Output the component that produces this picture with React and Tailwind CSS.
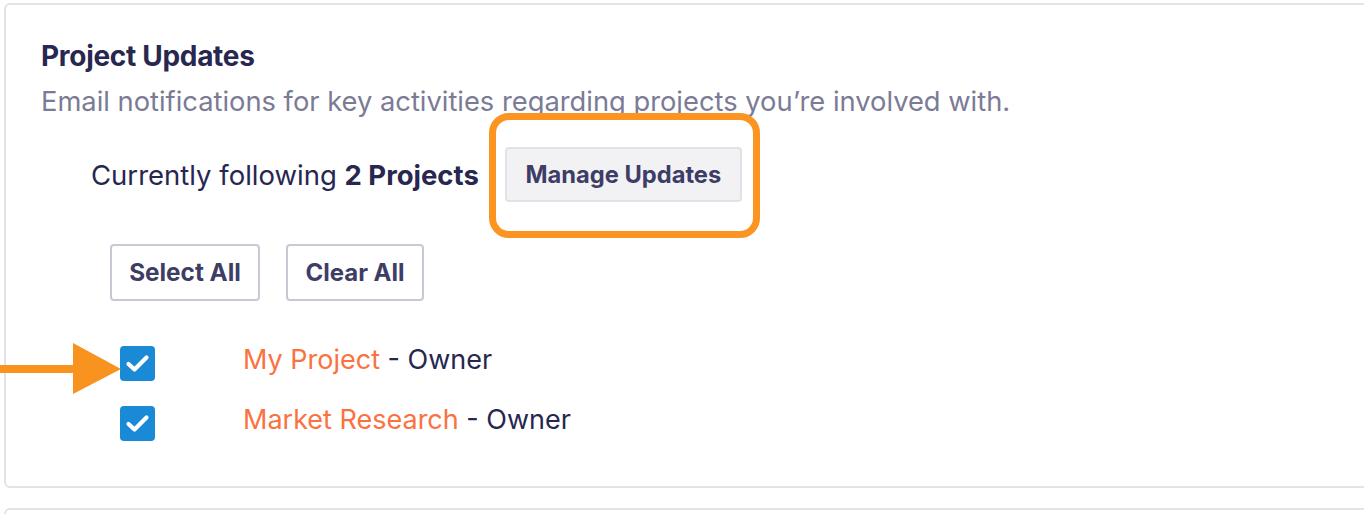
import React from "react";

function Check() {
  return (
    <div className="w-[35px] h-[35px] rounded-[4px] bg-[#1a8ad6] flex items-center justify-center">
      <svg width="35" height="35" viewBox="0 0 35 35" fill="none">
        <path d="M8.5 18 L14.5 23.5 L26.5 11.5" stroke="white" strokeWidth="4.2" strokeLinecap="round" strokeLinejoin="round" />
      </svg>
    </div>
  );
}

export default function App() {
  return (
    <div className="w-[1364px] h-[514px] bg-white overflow-hidden pt-[3px] pl-[4px] relative font-['Inter',sans-serif]">
      <div className="w-[1400px] h-[485px] border-2 border-[#e2e2e8] rounded-[6px] pl-[35px] pt-[34px] relative">
        <h2 className="text-[28px] leading-[34px] font-bold text-[#27274f] tracking-[-0.3px]">Project Updates</h2>
        <p className="text-[27.3px] leading-[34px] text-[#7b7b95] mt-[12px]">
          Email notifications for key activities regarding projects you’re involved with.
        </p>
        <div className="flex items-center mt-[28px] pl-[50px]">
          <span className="text-[27.5px] leading-[34px] text-[#27274f]">
            Currently following <span className="font-bold">2 Projects</span>
          </span>
          <button className="ml-[26px] h-[55px] w-[237px] bg-[#f2f2f5] border-2 border-[#e1e1e7] rounded-[4px] text-[23.7px] font-bold text-[#3d3d66]">
            Manage Updates
          </button>
        </div>
        <div className="flex gap-[26px] mt-[42px] pl-[69px]">
          <button className="h-[57px] w-[150px] border-2 border-[#c9c9d4] rounded-[4px] text-[24.3px] font-bold text-[#3d3d66]">
            Select All
          </button>
          <button className="h-[57px] w-[138px] border-2 border-[#c9c9d4] rounded-[4px] text-[24px] font-bold text-[#3d3d66]">
            Clear All
          </button>
        </div>
        <div className="flex flex-col gap-[22px] mt-[43px] pl-[79px]">
          <div className="flex items-center">
            <Check />
            <span className="ml-[88px] mb-[6px] text-[27px] leading-[32px] text-[#27274f]">
              <span className="text-[#fa7240]">My Project</span> - Owner
            </span>
          </div>
          <div className="flex items-center">
            <Check />
            <span className="ml-[88px] mb-[6px] text-[27px] leading-[32px] text-[#27274f]">
              <span className="text-[#fa7240]">Market Research</span> - Owner
            </span>
          </div>
        </div>
      </div>
      <div className="w-[1400px] h-[40px] border-2 border-[#e2e2e8] rounded-[6px] mt-[20px]"></div>

      {/* highlight box */}
      <div className="absolute left-[489px] top-[113px] w-[271px] h-[125px] border-[7px] border-[#fb9420] rounded-[20px]"></div>
      {/* arrow */}
      <svg className="absolute left-0 top-[340px]" width="124" height="56" viewBox="0 0 124 56">
        <rect x="0" y="25" width="80" height="8" fill="#f7931e" />
        <polygon points="73,3 121,29 73,54" fill="#f7931e" />
      </svg>
    </div>
  );
}
